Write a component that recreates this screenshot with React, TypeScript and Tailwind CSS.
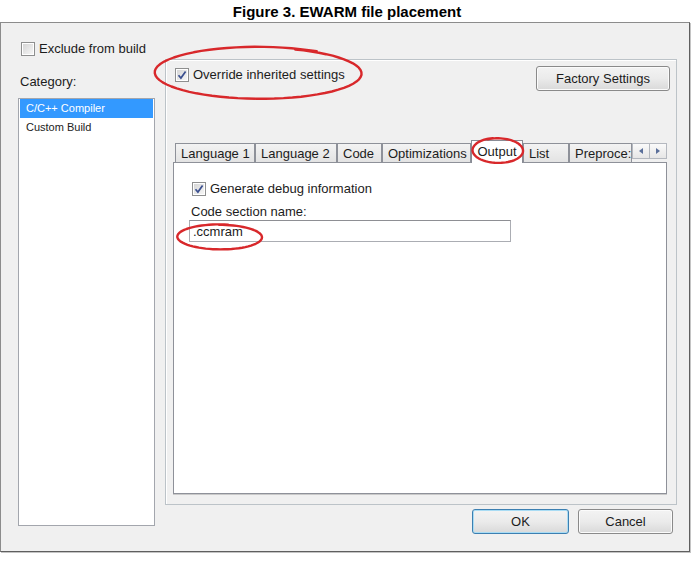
import React from 'react';

// hand drawn red loop, a little spiral so the ends overlap like a pen stroke
function loopPath(cx: number, cy: number, rx: number, ry: number, start: number, wobble: number) {
  const n = 72;
  const sweep = Math.PI * 2 + 0.22;
  const pts: string[] = [];
  for (let i = 0; i <= n; i++) {
    const t = start + (sweep * i) / n;
    const k = 1 + wobble * Math.sin(t * 2 + 0.6) + (i / n) * 0.035 - 0.018;
    const x = cx + rx * k * Math.cos(t);
    const y = cy + ry * k * Math.sin(t);
    pts.push(`${x.toFixed(1)},${y.toFixed(1)}`);
  }
  return 'M' + pts.join(' L');
}

const CheckBox = ({ checked }: { checked?: boolean }) => (
  <span className="w-[14px] h-[14px] border border-[#8e8f8f] bg-white p-px flex shrink-0">
    <span className="flex-1 bg-linear-to-br from-[#d6d6d6] to-[#f6f6f6] flex items-center justify-center">
      {checked && (
        <svg width="10" height="10" viewBox="0 0 10 10">
          <path d="M1.5 5.2 L3.9 8 L8.6 1.4" fill="none" stroke="#3a4f8f" strokeWidth="1.7" />
        </svg>
      )}
    </span>
  </span>
);

const Tab = ({ label, w, selected }: { label: string; w: string; selected?: boolean }) =>
  selected ? (
    <div className={`${w} h-[23px] -mb-px relative z-10 bg-white border border-b-0 border-[#898c95] flex items-center justify-center pb-[2px]`}>
      {label}
    </div>
  ) : (
    <div className={`${w} h-[19px] bg-linear-to-b from-[#f3f3f3] to-[#e3e3e3] border border-b-0 border-[#8e9199] flex items-center pl-[5px] whitespace-nowrap`}>
      {label}
    </div>
  );

const Button = ({ label, w, focus }: { label: string; w: string; focus?: boolean }) => (
  <div
    className={`${w} h-[25px] rounded-[3px] border flex items-center justify-center bg-linear-to-b from-[#f3f3f3] via-[#ebebeb] to-[#d9d9d9] ${
      focus ? 'border-[#3c7fb1] shadow-[inset_0_0_0_1px_#a9dcf4]' : 'border-[#8a8a8a] shadow-[inset_0_0_0_1px_#fbfbfb]'
    }`}
  >
    {label}
  </div>
);

export default function App() {
  return (
    <div className="w-[694px] h-[569px] bg-white relative font-['Liberation_Sans',Arial,sans-serif] text-[13px] leading-[15px] text-[#1c1c1c]">
      <div className="h-[22px] flex items-center justify-center font-bold text-[15px] text-black">
        Figure 3. EWARM file placement
      </div>

      <div className="w-[690px] h-[530px] bg-[#f0f0f0] border border-[#8c8c8c] border-r-[#5f5f5f] border-b-[#5f5f5f] shadow-[1px_1px_0_#c4c4c4] flex">
        {/* left column */}
        <div className="pl-[17px] pt-[18px] w-[154px] flex flex-col">
          <div className="h-[15px] flex items-center gap-[4px] ml-[3px]">
            <CheckBox />
            <span>Exclude from build</span>
          </div>
          <div className="mt-[18px] ml-[2px] h-[15px]">Category:</div>
          <div className="mt-[9px] w-[137px] h-[428px] bg-white border border-[#a3a6ad] text-[11px] leading-[19px]">
            <div className="mx-px h-[19px] bg-[#3399ff] text-white pl-[6px]">C/C++ Compiler</div>
            <div className="mx-px h-[19px] pl-[6px] text-[#222]">Custom Build</div>
          </div>
        </div>

        {/* right column */}
        <div className="ml-[10px] pt-[36px] flex flex-col">
          <div className="w-[512px] h-[446px] border border-[#bcc3c8] shadow-[inset_1px_1px_0_#ffffff] flex flex-col">
            <div className="pt-[6px] pl-[9px] pr-[6px] flex justify-between">
              <div className="h-[17px] flex items-center gap-[4px]">
                <CheckBox checked />
                <span>Override inherited settings</span>
              </div>
              <Button label="Factory Settings" w="w-[134px]" />
            </div>

            <div className="ml-[7px] mt-[49px] w-[494px] flex flex-col">
              <div className="h-[22px] pl-[2px] flex items-end">
                <Tab label="Language 1" w="w-[80px]" />
                <Tab label="Language 2" w="w-[82px]" />
                <Tab label="Code" w="w-[45px]" />
                <Tab label="Optimizations" w="w-[89px]" />
                <Tab label="Output" w="w-[52px]" selected />
                <Tab label="List" w="w-[46px]" />
                <Tab label="Preproce:" w="w-[63px]" />
                <div className="self-start mt-[3px] h-[16px] w-[35px] flex">
                  <div className="flex-1 border border-[#b4b8bf] bg-linear-to-b from-[#fafafa] to-[#e6e6e6] flex items-center justify-center">
                    <svg width="4" height="6" viewBox="0 0 4 6"><path d="M4 0 L0 3 L4 6 Z" fill="#5a6f9a" /></svg>
                  </div>
                  <div className="flex-1 border border-l-0 border-[#b4b8bf] bg-linear-to-b from-[#fafafa] to-[#e6e6e6] flex items-center justify-center">
                    <svg width="4" height="6" viewBox="0 0 4 6"><path d="M0 0 L4 3 L0 6 Z" fill="#5a6f9a" /></svg>
                  </div>
                </div>
              </div>

              <div className="h-[332px] bg-white border border-[#8e9199] shadow-[0_1px_0_#c9c9c9] flex flex-col">
                <div className="mt-[18px] ml-[18px] h-[15px] flex items-center gap-[4px]">
                  <CheckBox checked />
                  <span>Generate debug information</span>
                </div>
                <div className="mt-[8px] ml-[17px] h-[15px]">Code section name:</div>
                <div className="mt-px ml-[15px] w-[322px] h-[22px] border border-[#abadb3] border-t-[#8e8f94] bg-white flex items-center pl-[3px]">
                  .ccmram
                </div>
              </div>
            </div>
          </div>

          <div className="mt-[4px] pr-[4px] flex justify-end gap-[9px]">
            <Button label="OK" w="w-[97px]" focus />
            <Button label="Cancel" w="w-[95px]" />
          </div>
        </div>
      </div>

      <svg className="absolute inset-0 z-20 pointer-events-none" width="694" height="569">
        <g fill="none" stroke="#d8282b" strokeWidth="2.4" strokeLinecap="round" strokeLinejoin="round">
          <path d={loopPath(259, 73, 103, 26, -1.2, 0.012)} />
          <path d={loopPath(498, 150.5, 25, 12.5, -2.0, 0.015)} />
          <path d={loopPath(220, 237, 42, 12.5, -1.6, 0.015)} />
        </g>
      </svg>
    </div>
  );
}
